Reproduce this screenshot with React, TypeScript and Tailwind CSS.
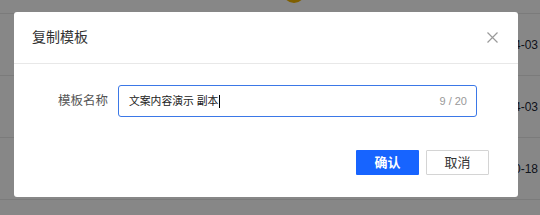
import React from 'react';

const rows = ['2024-04-03', '2024-04-03', '2023-10-18'];

const CloseIcon: React.FC = () => (
  <svg width="11" height="11" viewBox="0 0 11 11" fill="none" stroke="#9a9a9a" strokeWidth="1.2">
    <path d="M0.5 0.5 L10.5 10.5 M10.5 0.5 L0.5 10.5" />
  </svg>
);

const App: React.FC = () => {
  return (
    <div className="relative w-[540px] h-[215px] overflow-hidden bg-white font-['Liberation_Sans','Noto_Sans_CJK_SC',sans-serif]">
      {/* page behind the modal */}
      <div className="absolute left-[283px] top-[-20px] w-[22px] h-[23px] rounded-full bg-[#f0b400]" />
      <div className="flex flex-col pt-[13px]">
        {rows.map((d, i) => (
          <div key={i} className="flex h-[62px] items-center justify-end border-t border-[#e8e8e8] pr-[2px] text-[12px] text-[#1c2636]">
            {d}
          </div>
        ))}
        <div className="h-[16px] border-t border-[#e8e8e8]" />
      </div>

      {/* mask */}
      <div className="absolute inset-0 bg-black/[0.47]" />

      {/* dialog */}
      <div className="absolute left-[14px] top-[12px] w-[504px] h-[185px] rounded-[3px] bg-white flex flex-col">
        <div className="flex h-[52px] items-center justify-between border-b border-[#e8e8e8] pl-[18px] pr-[20px]">
          <span className="text-[14px] text-[#333]">复制模板</span>
          <CloseIcon />
        </div>
        <div className="flex items-center mt-[21px]">
          <label className="w-[94px] text-right text-[12.5px] text-[#555]">模板名称</label>
          <div className="ml-[10px] flex h-[32px] w-[359px] items-center rounded-[3px] border border-[#3b78e7] pl-[10px] pr-[9px]">
            <span className="text-[10.8px] text-[#222]">文案内容演示 副本</span>
            <span className="ml-[1px] h-[13px] w-px bg-black" />
            <span className="ml-auto text-[11px] text-[#999]">9 / 20</span>
          </div>
        </div>
        <div className="flex justify-end gap-[7px] mt-[33px] pr-[29px]">
          <button className="h-[25px] w-[63px] rounded-[1px] bg-[#1764ff] text-[13px] font-bold text-white">确认</button>
          <button className="h-[25px] w-[63px] rounded-[1px] border border-[#d4d4d4] bg-white text-[13px] text-[#333]">取消</button>
        </div>
      </div>
    </div>
  );
};

export default App;
